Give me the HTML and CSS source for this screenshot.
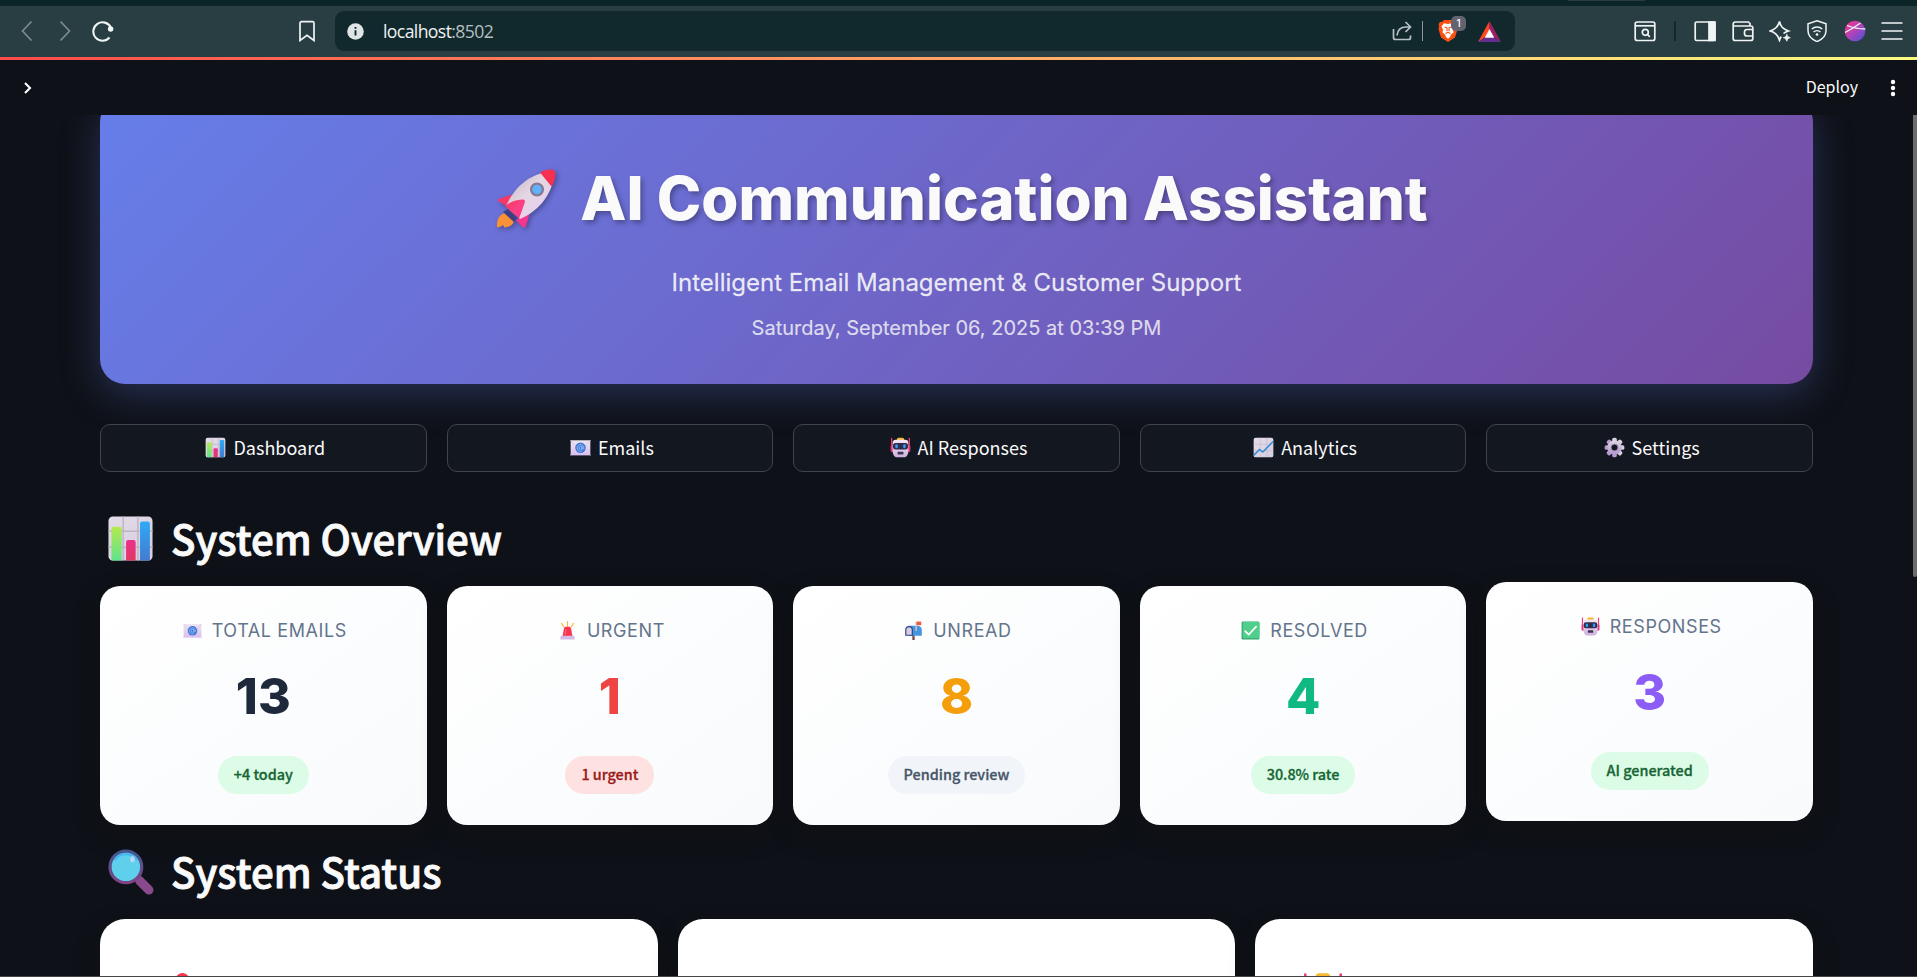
FILE: index.html
```html
<!DOCTYPE html>
<html lang="en">
<head>
<meta charset="utf-8">
<title>AI Communication Assistant</title>
<link rel="stylesheet" href="styles.css">
</head>
<body>
<svg class="defs" width="0" height="0" aria-hidden="true">
  <defs>
    <linearGradient id="paper" x1="0" y1="0" x2="1" y2="1"><stop offset="0" stop-color="#e3dce8"/><stop offset="1" stop-color="#d6cde0"/></linearGradient>
    <linearGradient id="green" x1="0" y1="0" x2="0" y2="1"><stop offset="0" stop-color="#b5e94f"/><stop offset="1" stop-color="#5fe38c"/></linearGradient>
    <linearGradient id="pink" x1="0" y1="0" x2="0" y2="1"><stop offset="0" stop-color="#ec2f8c"/><stop offset="1" stop-color="#e03a64"/></linearGradient>
    <linearGradient id="blue" x1="0" y1="0" x2="0" y2="1"><stop offset="0" stop-color="#2fa9f7"/><stop offset="1" stop-color="#437bd0"/></linearGradient>
    <linearGradient id="mail" x1="0" y1="0" x2="0" y2="1"><stop offset="0" stop-color="#efe6f0"/><stop offset="1" stop-color="#d9bdf0"/></linearGradient>
    <linearGradient id="body" x1="0" y1="0" x2="1" y2="1"><stop offset="0" stop-color="#b9aeb8"/><stop offset=".45" stop-color="#e4d6e2"/><stop offset="1" stop-color="#e8cdf5"/></linearGradient>
    <linearGradient id="fin" x1="0" y1="0" x2="1" y2="1"><stop offset="0" stop-color="#f23a60"/><stop offset=".6" stop-color="#ff3f85"/><stop offset="1" stop-color="#f0358c"/></linearGradient>
    <linearGradient id="head" x1="0" y1="0" x2="0" y2="1"><stop offset="0" stop-color="#f3e9f5"/><stop offset="1" stop-color="#ccb0de"/></linearGradient>
    <linearGradient id="gear" x1="0" y1="0" x2="0" y2="1"><stop offset="0" stop-color="#dcd6e0"/><stop offset="1" stop-color="#b394d0"/></linearGradient>
    <linearGradient id="ball" x1="0" y1="0" x2="1" y2="1"><stop offset=".2" stop-color="#e0399b"/><stop offset=".55" stop-color="#a545bd"/><stop offset="1" stop-color="#3f55dd"/></linearGradient>
    <linearGradient id="rim" x1="0" y1="0" x2="0" y2="1"><stop offset="0" stop-color="#41588f"/><stop offset="1" stop-color="#7c4585"/></linearGradient>
  </defs>
  <symbol id="i-chart" viewBox="0 0 32 32">
    <rect x="1" y="1" width="30" height="30" rx="3" fill="url(#paper)"/>
    <path d="M11 1v30M21 1v30M1 11h30M1 22h30" stroke="#bdb4c4" stroke-width="1"/>
    <path d="M3 31V9.500a1.500 1.500 0 0 1 1.500-1.500h4A1.500 1.500 0 0 1 10 9.500V31z" fill="url(#green)"/>
    <path d="M13 31V18.500a1.500 1.500 0 0 1 1.500-1.500h3.500a1.500 1.500 0 0 1 1.500 1.500V31z" fill="url(#pink)"/>
    <path d="M22.500 31V6A1.500 1.500 0 0 1 24 4.500h3.700A1.500 1.500 0 0 1 29.200 6V31z" fill="url(#blue)"/>
  </symbol>
  <symbol id="i-mail" viewBox="0 0 32 32">
    <rect x="1" y="5" width="30" height="23" fill="url(#mail)"/>
    <path d="M1 5l9 11L1 28M31 5l-9 11 9 12" fill="none" stroke="#dbc9e2" stroke-width="1.500"/>
    <circle cx="16" cy="16.500" r="8" fill="#3b78d8"/>
    <circle cx="16" cy="16.500" r="2.400" fill="none" stroke="#a9c6f5" stroke-width="1.300"/>
    <path d="M18.600 14v3.600c0 2 2.600 1.400 2.600-1a5.200 5.200 0 1 0-2.600 4.500" fill="none" stroke="#a9c6f5" stroke-width="1.200"/>
  </symbol>
  <symbol id="i-robot" viewBox="0 0 32 32">
    <path d="M2.500 2v19M29.500 2v19" stroke="#f2386e" stroke-width="2" stroke-linecap="round"/>
    <rect x="1" y="12" width="4" height="11" rx="2" fill="#e8357a"/><rect x="27" y="12" width="4" height="11" rx="2" fill="#e8357a"/>
    <rect x="10.500" y="1" width="11" height="6" rx="2.500" fill="#f7b832"/>
    <path d="M9 4h14a5 5 0 0 1 5 5v12c0 6-3 10-6 10H10c-3 0-6-4-6-10V9a5 5 0 0 1 5-5z" fill="url(#head)"/>
    <rect x="4.500" y="9" width="23" height="10" rx="4" fill="#352a4c"/>
    <rect x="8" y="11" width="4" height="6" rx="2" fill="#2aa3ee"/><rect x="20" y="11" width="4" height="6" rx="2" fill="#2aa3ee"/>
    <rect x="11.500" y="22.500" width="9" height="4" rx="1" fill="#413354"/>
  </symbol>
  <symbol id="i-trend" viewBox="0 0 32 32">
    <rect x="1" y="1" width="30" height="30" rx="3" fill="url(#paper)"/>
    <path d="M11 1v30M21 1v30M1 11h30M1 21h30" stroke="#c3b9cc"/>
    <path d="M1 28l9-9 5 4L30.500 7" fill="none" stroke="#318bd9" stroke-width="2.200"/>
  </symbol>
  <symbol id="i-gear" viewBox="0 0 32 32">
    <g fill="url(#gear)"><rect x="12.500" y="1" width="7" height="30" rx="2.500"/><rect x="12.500" y="1" width="7" height="30" rx="2.500" transform="rotate(45 16 16)"/><rect x="12.500" y="1" width="7" height="30" rx="2.500" transform="rotate(90 16 16)"/><rect x="12.500" y="1" width="7" height="30" rx="2.500" transform="rotate(135 16 16)"/><circle cx="16" cy="16" r="11"/></g>
    <circle cx="16" cy="16" r="5" fill="#13171f" stroke="#9a86ad" stroke-width="1"/>
  </symbol>
  <symbol id="i-siren" viewBox="0 0 32 32">
    <path d="M16 1v8M6 4l4.500 7M26 4l-4.500 7" stroke="#fbb63a" stroke-width="1.800" stroke-linecap="round"/>
    <path d="M7.500 26l2.500-13c.5-2.500 1.800-3.500 4-3.500h4c2.200 0 3.500 1 4 3.500l2.500 13z" fill="#f8344f"/>
    <path d="M12 23l1.500-9" stroke="#ff7d86" stroke-width="1.500"/>
    <path d="M4 31v-3.500C4 26 5 25 6.500 25h19c1.500 0 2.500 1 2.500 2.500V31z" fill="#d3bbe6"/>
  </symbol>
  <symbol id="i-mailbox" viewBox="0 0 32 32">
    <rect x="14" y="22" width="4" height="10" fill="#7b4a4e"/>
    <path d="M8 8h15a7 7 0 0 1 7 7v10H8z" fill="#4596de"/>
    <path d="M2 25V15a6.500 6.500 0 0 1 13 0v10z" fill="#33457e"/>
    <path d="M4 23v-8a4.500 4.500 0 0 1 9 0v8z" fill="#d9cce6"/>
    <path d="M20.500 17V1.500" stroke="#d3c6dc" stroke-width="2.200"/><rect x="21" y="1" width="8" height="6" fill="#f8553f"/>
  </symbol>
  <symbol id="i-check" viewBox="0 0 32 32">
    <rect x="1" y="1" width="30" height="30" rx="2" fill="#32a86e"/><rect x="3" y="1.500" width="28" height="27.500" rx="2" fill="#4fcf8b"/>
    <path d="M7 17l6 6L25.500 9.500" fill="none" stroke="#fff" stroke-width="2.800" stroke-linecap="round" stroke-linejoin="round"/>
  </symbol>
  <symbol id="i-lens" viewBox="0 0 45 45">
    <path d="M31 31l9 9" stroke="#884a8c" stroke-width="9" stroke-linecap="round"/>
    <circle cx="17.500" cy="17.500" r="15.500" fill="#5fd0ec" stroke="url(#rim)" stroke-width="3.200"/>
    <path d="M6.500 11a13.200 13.200 0 0 1 22 0" fill="none" stroke="#44b5f2" stroke-width="2"/>
    <ellipse cx="24" cy="10" rx="2.200" ry="3" fill="#b9d9f7"/>
  </symbol>
  <symbol id="i-rocket" viewBox="0 0 60 60">
    <path d="M8.500 44C2.500 46 .500 52 1 58.500l4-1 2-1.500 1.500 2.500c5-.5 9-2.500 9.500-7z" fill="#fb9136"/>
    <path d="M7 43l5-3 9 9-3 4z" fill="#3d3f80"/>
    <path d="M2 32q-.5-2 2-2.500l12-4L11 37z" fill="#f83968"/><path d="M34 43l-4 14q-1 2-3 1.500L20 51z" fill="#f4358c"/>
    <path d="M10 37C18 20 30 6 55 2c3 0 4 1 3.500 4C55 28 41 43 24 50z" fill="url(#body)"/>
    <path d="M44 3.500C50 0 59.500-1 59.500 4c0 5-1 9-4 13.500z" fill="#f72f50"/>
    <path d="M9 37c6-5 12-6 17-6.500 3-.2 3.500 1.500 2.500 4-2 5-3 9-5.500 15z" fill="url(#fin)"/>
    <circle cx="41" cy="20.500" r="5.900" fill="#5fb2fb" stroke="#857a92" stroke-width="2.300"/>
  </symbol>
</svg>

<header class="browser">
  <div class="tabstrip"><span class="tab-edge"></span></div>
  <div class="toolbar">
    <div class="nav-group">
      <svg class="ic dim" viewBox="0 0 22 22"><path d="M15.500 1.500L6.500 11l9 9.500"/></svg>
      <svg class="ic dim" viewBox="0 0 22 22"><path d="M6.500 1.500l9 9.500-9 9.500"/></svg>
      <svg class="ic reload" viewBox="0 0 22 22"><path d="M17.500 17.500A9.200 9.200 0 1 1 18.800 7.500"/><circle cx="18.600" cy="9" r="1.700" fill="#fff"/></svg>
    </div>
    <svg class="ic bookmark" viewBox="0 0 22 22"><path d="M4 3.200a1.500 1.500 0 0 1 1.500-1.500h11A1.500 1.500 0 0 1 18 3.200v17.300l-7-5.200-7 5.200z"/></svg>
    <div class="urlbar">
      <svg class="info" viewBox="0 0 17 17"><circle cx="8.500" cy="8.500" r="8.300" fill="#dfe5e5"/><path d="M8.500 7.300v5.200M8.500 4v1.800" stroke="#11292d" stroke-width="1.900"/></svg>
      <span class="url">localhost<span class="port">:8502</span></span>
      <svg class="ic share" viewBox="0 0 22 22"><path d="M2.500 9v8.500a2 2 0 0 0 2 2h13a2 2 0 0 0 2-2v-2M6 15.500c.500-5.500 4-8.500 9-8.500h4M14.500 2l5 5-5 5"/></svg>
      <span class="url-sep"></span>
      <span class="brave">
        <svg viewBox="0 0 20 24" width="20" height="24"><path d="M6 1h8l2 2 2-.3 1.500 2.800-.6 1.500.6 3-2.500 8.500L10 23l-7-4.500L.5 10l.6-3-.6-1.500L2 2.700 4 3z" fill="#fb500f"/><path d="M10 5l4-.8 2.500 3.300-1.500 3.300.5 2.700-2.500 2-1 2.500-2 1.700L8 18l-1-2.500-2.500-2 .5-2.700-1.500-3.300L6 4.200z" fill="#fff"/><path d="M6.500 8l2.500.8v3.500M13.500 8l-2.500.8v3.500M7.500 14.500l2.500-1.200 2.500 1.200" fill="none" stroke="#fb500f" stroke-width="1.100"/></svg>
        <b class="shield-count">1</b>
      </span>
      <svg class="bat" viewBox="0 0 24 22"><path d="M12 0L0 22l12-8z" fill="#ff4724"/><path d="M12 0l12 22-12-8z" fill="#9e1f63"/><path d="M0 22h24l-7.500-5h-9z" fill="#662d91"/><path d="M12 8.500L17 17.500H7z" fill="#fff"/></svg>
    </div>
    <div class="tool-group">
      <svg class="ic" viewBox="0 0 22 22"><rect x="1.200" y="2" width="19.600" height="18.500" rx="2"/><path d="M1 5.800h20"/><circle cx="11.300" cy="12.300" r="3"/><path d="M13.500 14.500l2.300 2.300"/></svg>
      <span class="tool-sep"></span>
      <svg class="ic" viewBox="0 0 22 22"><rect x="1.200" y="2" width="19.600" height="18.500" rx="1.500"/><path d="M15 2h6v18.500h-6z" fill="#f1f4f4"/></svg>
      <svg class="ic" viewBox="0 0 22 22"><path d="M18 6V3.500L16.500 2H3.200a2 2 0 0 0-2 2v14.500a2 2 0 0 0 2 2h15.600a2 2 0 0 0 2-2V8a2 2 0 0 0-2-2H1.500M20.800 9.500H15a2.500 2.500 0 0 0-2.500 2.500v1.500A2.500 2.500 0 0 0 15 16h5.800"/></svg>
      <svg class="ic" viewBox="0 0 22 22"><path d="M10.500 1.500c1 5 3 7.500 9 9.500-2.500.8-4 1.500-5 2.500M10.500 1.500c-1.200 5-3.500 7.800-9.300 9.500 5.800 1.700 8.100 4.500 9.300 9.300.5-1.500 1-2.800 1.700-3.800"/><path d="M17.800 14.200c.5 2 1.200 2.800 3.500 3.500-2.300.7-3 1.500-3.500 3.500-.5-2-1.200-2.800-3.500-3.500 2.300-.7 3-1.500 3.500-3.500z" fill="#f1f4f4" stroke-width=".8"/></svg>
      <svg class="ic" viewBox="0 0 22 22"><path d="M11 .8l9 3v7c0 5-3.500 8.500-9 10.800C5.500 19.300 2 15.800 2 10.800v-7zM5.800 9a7.800 7.800 0 0 1 10.400 0M7.600 12a5 5 0 0 1 6.800 0" stroke-width="1.500"/><circle cx="11" cy="14.500" r="1.300" fill="#fff" stroke="none"/></svg>
      <svg class="ic" viewBox="0 0 22 22"><circle cx="11" cy="11" r="10.300" fill="url(#ball)" stroke="none"/><path d="M3 5.500c5 2 9 3.500 18.300 3.500M16.500 3C11 7 7 9.500 1 12.500" stroke-width="1.300"/></svg>
      <svg class="ic" viewBox="0 0 22 22"><path d="M.5 3h21M.5 11h21M.5 19h21"/></svg>
    </div>
  </div>
</header>

<div class="decoration"></div>
<div class="app-header">
  <svg class="expand" viewBox="0 0 10 14"><path d="M2 2l5 5-5 5"/></svg>
  <span class="deploy">Deploy</span>
  <svg class="kebab" viewBox="0 0 6 18"><circle cx="3" cy="3" r="2.200"/><circle cx="3" cy="9" r="2.200"/><circle cx="3" cy="15" r="2.200"/></svg>
</div>

<main class="app">
  <div class="content">
    <section class="hero">
      <h1 class="hero-title"><svg class="rocket"><use href="#i-rocket"/></svg><span>AI Communication Assistant</span></h1>
      <p class="hero-sub">Intelligent Email Management &amp; Customer Support</p>
      <p class="hero-date">Saturday, September 06, 2025 at 03:39 PM</p>
    </section>

    <nav class="tabs">
      <button class="tab"><svg><use href="#i-chart"/></svg><span>Dashboard</span></button>
      <button class="tab"><svg><use href="#i-mail"/></svg><span>Emails</span></button>
      <button class="tab"><svg><use href="#i-robot"/></svg><span>AI Responses</span></button>
      <button class="tab"><svg><use href="#i-trend"/></svg><span>Analytics</span></button>
      <button class="tab"><svg><use href="#i-gear"/></svg><span>Settings</span></button>
    </nav>

    <h2 class="section-title overview"><svg><use href="#i-chart"/></svg><span>System Overview</span></h2>
    <section class="metrics">
      <article class="metric"><div class="label"><svg><use href="#i-mail"/></svg><span>TOTAL EMAILS</span></div><div class="value navy">13</div><span class="badge ok">+4 today</span></article>
      <article class="metric"><div class="label"><svg><use href="#i-siren"/></svg><span>URGENT</span></div><div class="value red">1</div><span class="badge bad">1 urgent</span></article>
      <article class="metric"><div class="label"><svg><use href="#i-mailbox"/></svg><span>UNREAD</span></div><div class="value amber">8</div><span class="badge neutral">Pending review</span></article>
      <article class="metric"><div class="label"><svg><use href="#i-check"/></svg><span>RESOLVED</span></div><div class="value emerald">4</div><span class="badge ok">30.8% rate</span></article>
      <article class="metric lifted"><div class="label"><svg><use href="#i-robot"/></svg><span>RESPONSES</span></div><div class="value violet">3</div><span class="badge ok">AI generated</span></article>
    </section>

    <h2 class="section-title status"><svg><use href="#i-lens"/></svg><span>System Status</span></h2>
    <section class="status-cards">
      <article class="status-card"><svg class="status-icon" viewBox="0 0 45 45"><circle cx="38" cy="8" r="7" fill="#f8344f"/></svg></article>
      <article class="status-card"></article>
      <article class="status-card"><svg class="status-icon"><use href="#i-robot"/></svg></article>
    </section>
  </div>
  <div class="scroll-thumb"></div>
</main>
<div class="window-edge"></div>
</body>
</html>
```
FILE: styles.css
```css
* { box-sizing: border-box; }
body {
  margin: 0;
  height: 977px;
  overflow: hidden;
  display: flex;
  flex-direction: column;
  background: #0e1117;
  color: #fafafa;
  font-family: "Noto Sans CJK SC", "Noto Sans", sans-serif;
}
h1, h2, p { margin: 0; }
svg { display: block; flex: none; }
.defs { position: absolute; }

.browser { height: 57px; flex: none; background: #283e42; }
.tabstrip { height: 6px; background: #0b2427; display: flex; }
.tab-edge { width: 77px; height: 1px; margin-left: 1568px; background: #2b3b3e; }
.toolbar { height: 50px; display: flex; align-items: center; }
.ic { width: 22px; height: 22px; fill: none; stroke: #f1f4f4; stroke-width: 1.7; }
.ic.dim { stroke: #7c8b8e; }
.ic.reload { stroke-width: 2.1; }
.nav-group { display: flex; gap: 16px; padding-left: 16px; width: 296px; }
.urlbar {
  width: 1180px;
  height: 40px;
  margin-left: 17px;
  padding: 0 14px 0 12px;
  border-radius: 9px;
  background: #11292d;
  display: flex;
  align-items: center;
}
.info { width: 17px; height: 17px; }
.url { flex: 1; margin-left: 19px; font: 17.6px/24px "Open Sans", sans-serif; letter-spacing: -0.6px; color: #f0f3f3; }
.port { color: #b5bfc0; }
.share { stroke: #b9c2c3; }
.url-sep { width: 1px; height: 20px; margin-left: 9px; background: #8b9899; }
.brave { position: relative; width: 20px; margin-left: 15px; }
.shield-count {
  position: absolute;
  left: 13px;
  top: -3px;
  width: 15px;
  height: 15px;
  border-radius: 5px;
  background: #63646f;
  color: #fff;
  font: 500 10px/15px Inter, sans-serif;
  text-align: center;
}
.bat { width: 23px; height: 21px; margin-left: 20px; }
.tool-group { flex: 1; display: flex; justify-content: flex-end; align-items: center; gap: 15.4px; padding-right: 13.8px; }
.tool-sep { width: 2px; height: 20px; margin: 0 2.5px; background: #11292d; }

.decoration { height: 3px; flex: none; background: linear-gradient(90deg, #ff4b4b, #fffd80); }
.app-header { height: 55px; flex: none; display: flex; align-items: center; padding: 0 22px 0 23px; }
.expand { width: 10px; height: 14px; fill: none; stroke: #fff; stroke-width: 2.1; }
.deploy { margin-left: auto; padding-bottom: 3px; font-size: 16px; line-height: 24px; }
.kebab { width: 6px; height: 18px; margin-left: 32px; margin-right: -1px; fill: #fff; }

.app { position: relative; flex: 1; min-height: 0; overflow: hidden; }
.content { width: 1713px; margin: -18px 0 0 100px; }
.scroll-thumb { position: absolute; right: 0; top: 0; width: 4px; height: 462px; border-radius: 0 0 3px 3px; background: #6b6c70; }
.window-edge { height: 1px; flex: none; background: #454549; }

.hero {
  height: 287px;
  border-radius: 25px;
  background: linear-gradient(135deg, #667eea 0%, #764ba2 100%);
  box-shadow: 0 10px 40px rgba(102, 126, 234, 0.3);
  display: flex;
  flex-direction: column;
  align-items: center;
  padding-top: 64px;
  font-family: Inter, sans-serif;
}
.hero-title {
  display: flex;
  align-items: center;
  gap: 24px;
  height: 74px;
  padding-left: 11px;
  font-size: 60px;
  font-weight: 800;
  line-height: 74px;
  white-space: nowrap;
  text-shadow: 2.5px 2.5px 5px rgba(0, 0, 0, 0.3);
}
.rocket { width: 60px; height: 60px; margin-top: 2px; filter: drop-shadow(2.5px 2.5px 2.5px rgba(0, 0, 0, 0.3)); }
.hero-sub { margin-top: 29px; font-size: 24px; line-height: 38px; color: rgba(250, 250, 250, 0.9); -webkit-text-stroke: 0.3px rgba(250, 250, 250, 0.6); }
.hero-date { margin-top: 10px; font-size: 20px; line-height: 32px; color: rgba(250, 250, 250, 0.8); -webkit-text-stroke: 0.2px rgba(250, 250, 250, 0.5); }

.tabs { display: grid; grid-template-columns: repeat(5, 1fr); gap: 20px; margin-top: 40px; }
.tab {
  height: 48px;
  padding: 0 0 1px 4px;
  display: flex;
  align-items: center;
  justify-content: center;
  gap: 7px;
  border: 1px solid #41444c;
  border-radius: 10px;
  background: #131720;
  color: #fafafa;
  font: 18px/30px "Noto Sans CJK SC", sans-serif;
}
.tab span { padding-bottom: 1px; }
.tab svg { width: 21px; height: 21px; }

.section-title {
  display: flex;
  align-items: center;
  gap: 17px;
  height: 54px;
  padding-left: 7px;
  font-size: 40.2px;
  font-weight: 500;
  line-height: 54px;
  white-space: nowrap;
  -webkit-text-stroke: 0.9px #fafafa;
}
.section-title span { padding-bottom: 3px; }
.section-title svg { width: 47px; height: 47px; margin-top: -2px; }
.overview { margin-top: 40px; }
.metrics { display: grid; grid-template-columns: repeat(5, 1fr); gap: 20px; margin-top: 20px; }
.metric {
  height: 239px;
  border-radius: 20px;
  background: linear-gradient(145deg, #ffffff 0%, #f8fafc 100%);
  box-shadow: 0 10px 25px rgba(17, 17, 17, 0.4);
  display: flex;
  flex-direction: column;
  align-items: center;
  padding-top: 30px;
}
.lifted { transform: translateY(-4px); }
.label { display: flex; align-items: center; gap: 10px; height: 29px; padding-left: 3px; font: 18px/29px Inter, sans-serif; letter-spacing: 0.6px; color: #64748b; }
.label svg { width: 19px; height: 19px; }
.value { height: 60px; margin-top: 21px; font: 800 50px/60px Inter, sans-serif; }
.navy { color: #1e293b; }
.red { color: #ef4444; }
.amber { color: #f59e0b; }
.emerald { color: #10b981; }
.violet { color: #8b5cf6; }
.badge { height: 38px; margin-top: 30px; padding: 0 16px; border-radius: 20px; font-size: 14.4px; font-weight: 500; line-height: 35px; white-space: nowrap; -webkit-text-stroke: 0.3px currentColor; }
.ok { background: #dcfce7; color: #166534; }
.bad { background: #fee2e2; color: #991b1b; }
.neutral { background: #f1f5f9; color: #475569; }

.status { margin-top: 21px; padding-left: 8px; }
.status span { padding-bottom: 4px; }
.status svg { width: 46px; height: 46px; }
.status-cards { display: grid; grid-template-columns: repeat(3, 1fr); gap: 20px; margin-top: 19px; }
.status-card { height: 200px; border-radius: 25px; background: #fff; box-shadow: 0 10px 25px rgba(17, 17, 17, 0.4); padding: 53px 0 0 47px; }
.status-icon { width: 42px; height: 42px; }
```
